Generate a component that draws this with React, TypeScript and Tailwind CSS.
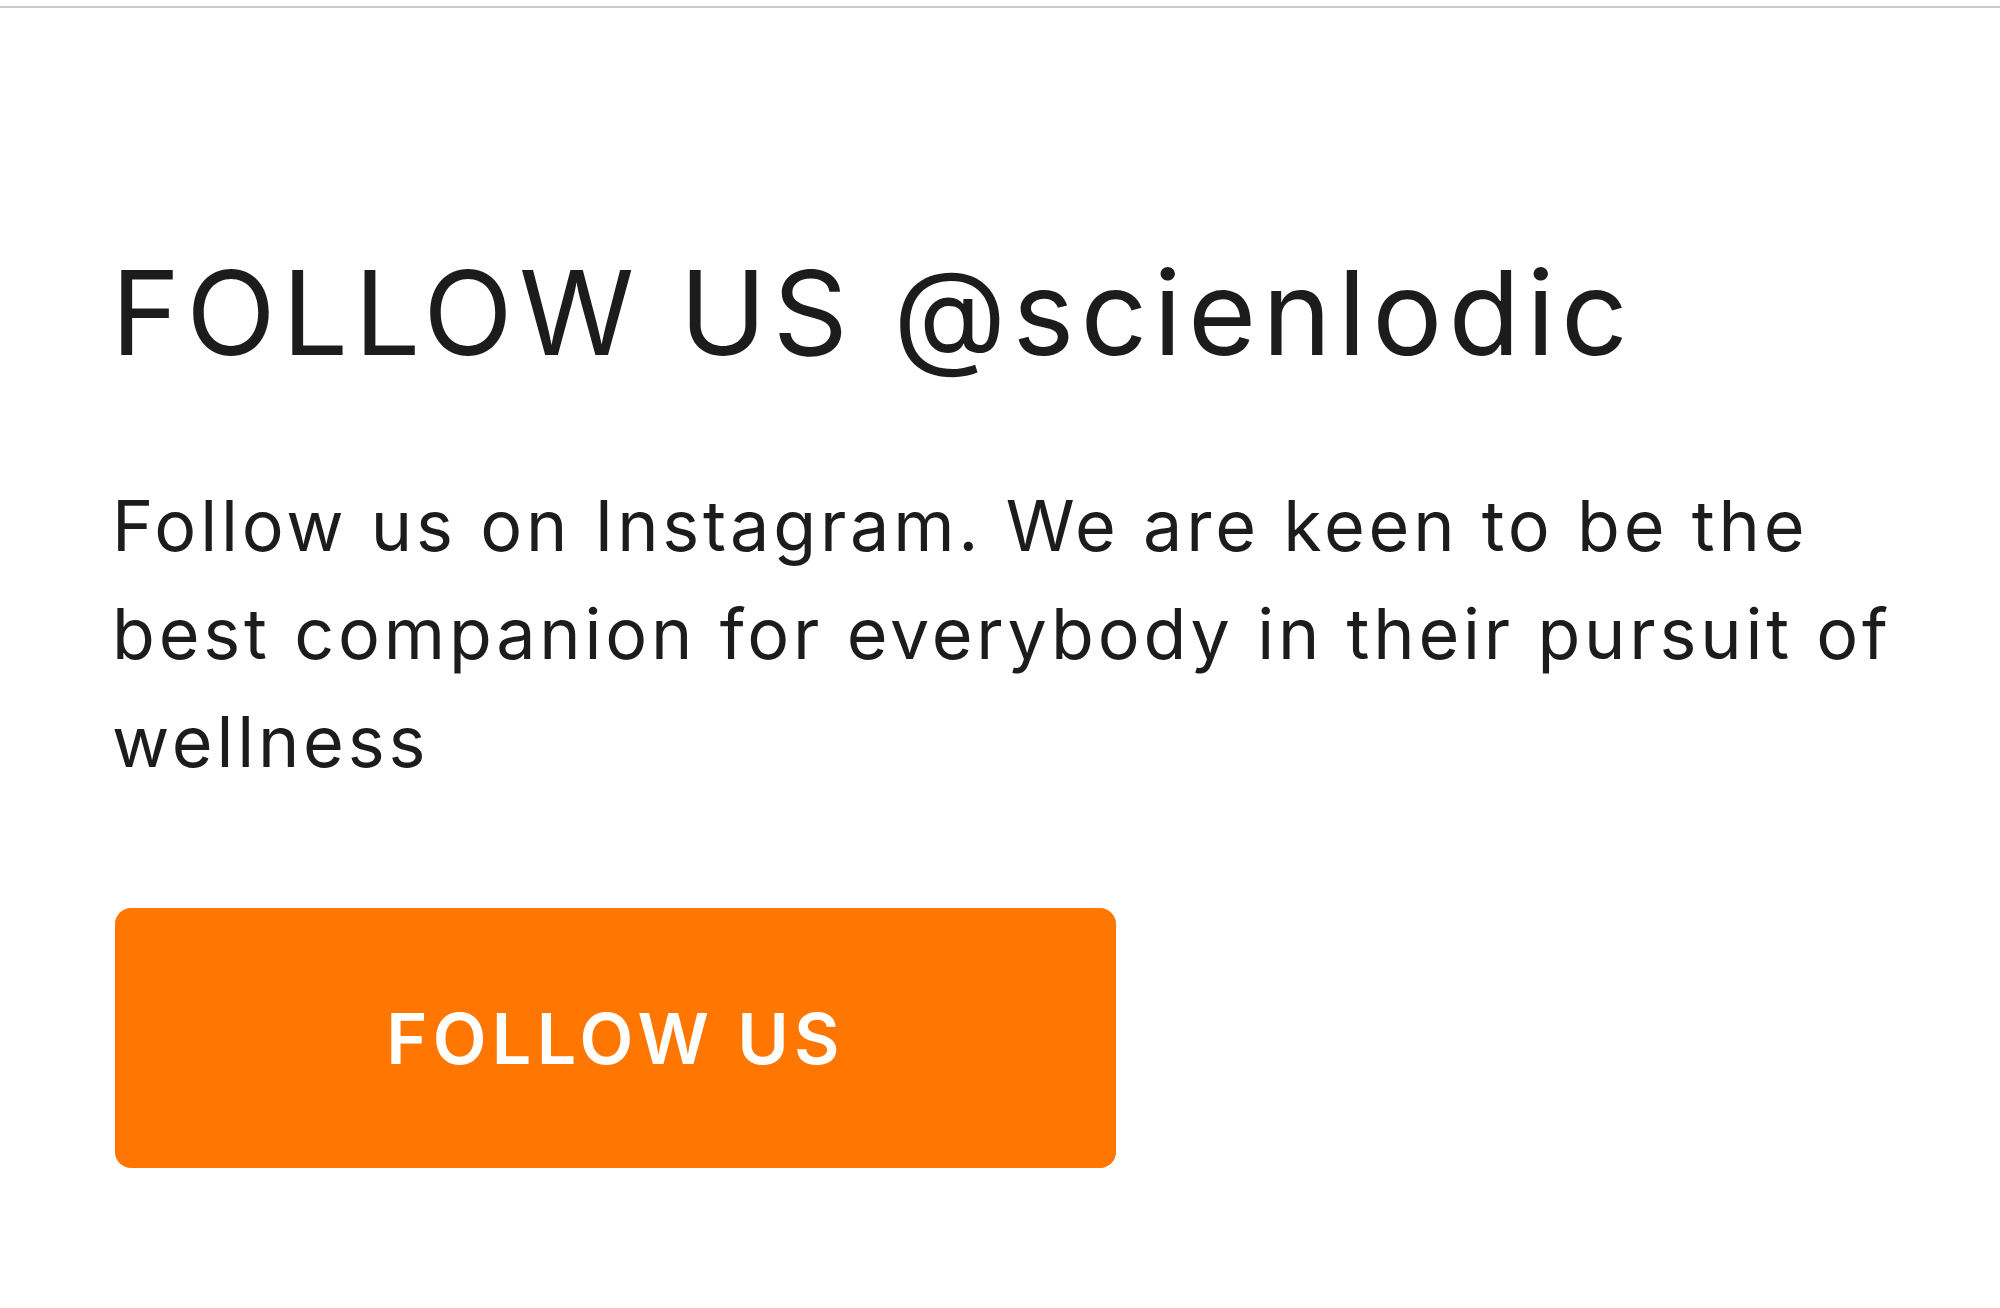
import React from 'react';

export default function App() {
  return (
    <div className="min-h-screen bg-white" style={{ fontFamily: 'Inter, "Noto Sans", sans-serif' }}>
      {/* top rule */}
      <div className="pt-[6px]">
        <div className="h-[2px] bg-[#cccccc]" />
      </div>

      <section className="pl-[111px] pt-[235px]">
        <h1 className="text-[117px] leading-[140px] font-normal text-[#1c1c1c] tracking-[6.2px]">
          FOLLOW US @scienlodic
        </h1>

        <p className="mt-[89px] ml-[1px] w-[1790px] text-[70px] leading-[108px] font-normal text-[#1c1c1c] tracking-[3.8px]">
          Follow us on Instagram. We are keen to be the best companion for everybody in their pursuit of wellness
        </p>

        <button
          type="button"
          className="mt-[112px] ml-[4px] w-[1001px] h-[260px] rounded-[16px] bg-[#ff7700] text-white text-[70px] font-semibold tracking-[5.3px] flex items-center justify-center"
        >
          FOLLOW US
        </button>
      </section>
    </div>
  );
}
